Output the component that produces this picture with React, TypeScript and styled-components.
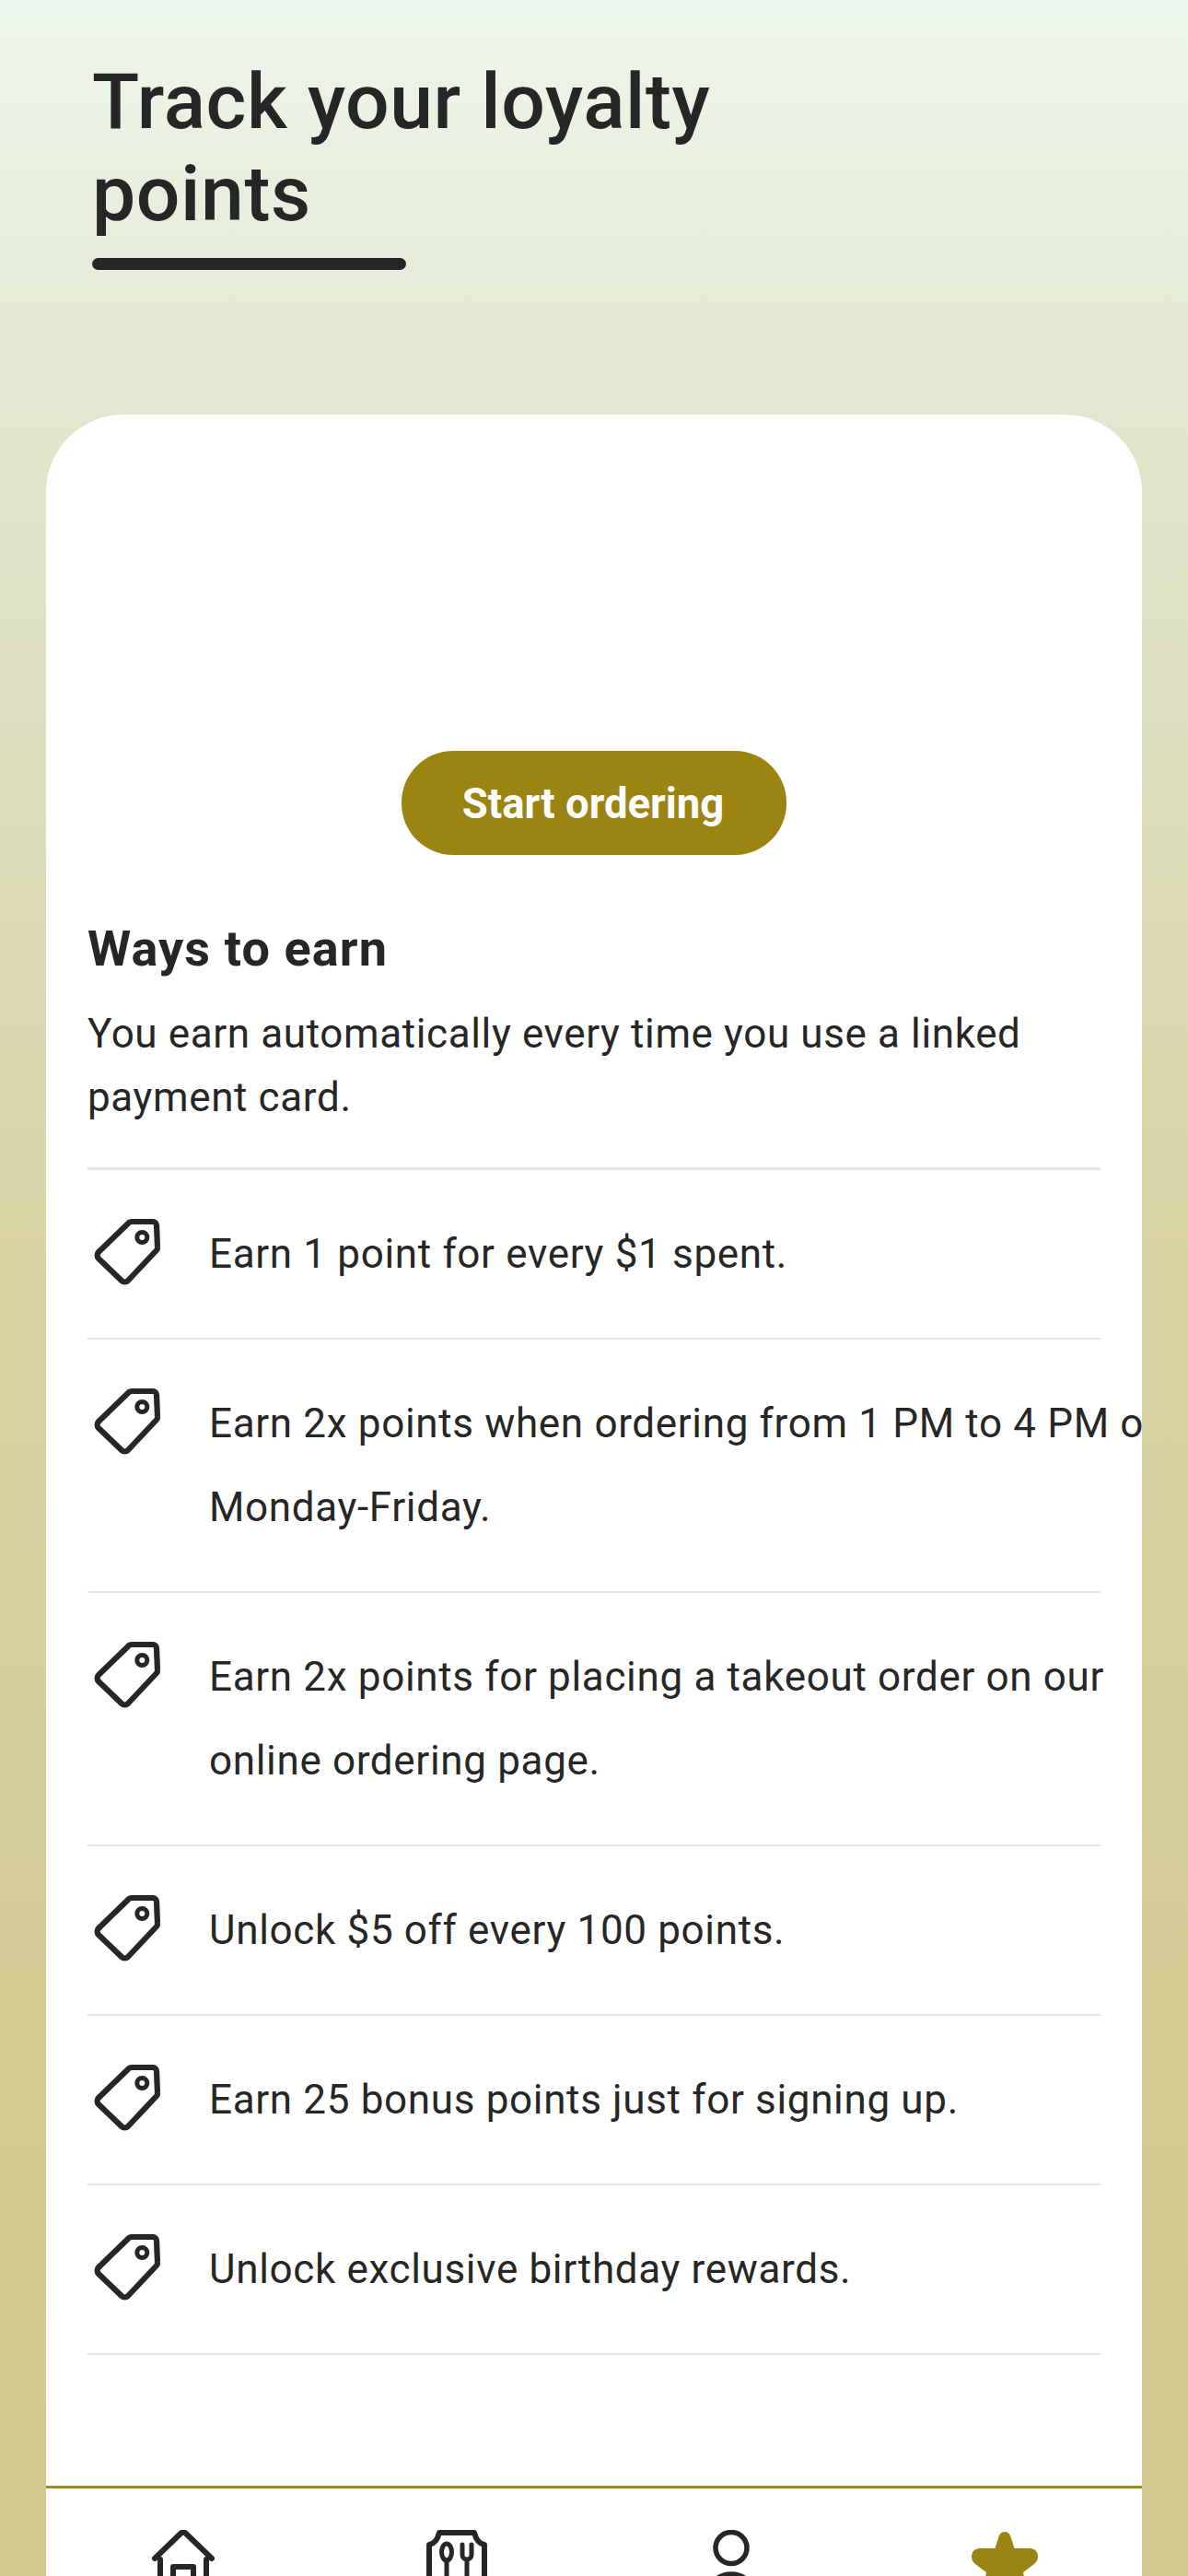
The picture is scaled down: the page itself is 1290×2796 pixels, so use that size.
import React from "react";
import styled, { createGlobalStyle } from "styled-components";

const Global = createGlobalStyle`
  html, body { margin: 0; padding: 0; height: 2796px; overflow: hidden; }
  body { font-family: Roboto, "Noto Sans", sans-serif; color: #262626; }
`;

const Page = styled.div`
  display: flex;
  flex-direction: column;
  width: 1290px;
  height: 2796px;
  overflow: hidden;
  background: linear-gradient(180deg, #edf6ec 0%, #e1e6cd 17%, #d8d2a2 50%, #d3c992 82%, #d3c890 100%);
`;

const Header = styled.header`
  height: 450px;
  box-sizing: border-box;
  padding: 61px 100px 0;
`;

const Title = styled.h1`
  margin: 0;
  width: 800px;
  font-size: 84px;
  line-height: 100px;
  font-weight: 500;
  letter-spacing: 0.6px;
  color: #262626;
`;

const TitleBar = styled.div`
  width: 341px;
  height: 13px;
  margin-top: 19px;
  border-radius: 7px;
  background: #262626;
`;

const Card = styled.main`
  flex: 1;
  min-height: 0;
  margin: 0 50px;
  display: flex;
  flex-direction: column;
  overflow: hidden;
  background: #fff;
  border-radius: 84px 84px 0 0;
`;

const Content = styled.div`
  flex: 1;
  min-height: 0;
  padding: 365px 45px 0;
`;

const CtaRow = styled.div`
  display: flex;
  justify-content: center;
`;

const Cta = styled.button`
  width: 418px;
  height: 113px;
  padding: 2px 2px 0 0;
  border: 0;
  border-radius: 56px;
  background: #9c8412;
  color: #fff;
  font: 700 45.500px Roboto, sans-serif;
`;

const Heading = styled.h2`
  margin: 70px 0 0;
  font-size: 54px;
  line-height: 64px;
  font-weight: 700;
  letter-spacing: 1.100px;
  color: #262626;
`;

const Lead = styled.p`
  margin: 26px 0 0;
  padding-bottom: 42px;
  font-size: 44px;
  line-height: 68.500px;
  font-weight: 400;
  letter-spacing: 0.62px;
  color: #262626;
`;

const List = styled.ul`
  list-style: none;
  margin: 0;
  padding: 0;
  width: 1100px;
  border-top: 3px solid #e4e4e4;
`;

const Item = styled.li`
  display: flex;
  align-items: flex-start;
  box-sizing: border-box;
  padding: 45.500px 0;
  border-bottom: 2px solid #e4e4e4;
`;

const TagIcon = styled.svg`
  flex: none;
  width: 80px;
  height: 80px;
  margin: 2px 47px 0 5px;
`;

const ItemText = styled.span`
  flex: none;
  width: 1050px;
  font-size: 44px;
  line-height: 91px;
  letter-spacing: 0.66px;
  color: #262626;
`;

const Nav = styled.nav`
  flex: none;
  height: 98px;
  box-sizing: border-box;
  display: grid;
  grid-template-columns: repeat(4, 1fr);
  overflow: hidden;
  border-top: 3px solid #9c8a1f;
`;

const NavItem = styled.div`
  display: flex;
  justify-content: center;
  padding-top: 45px;
`;

const NavIcon = styled.svg`
  flex: none;
  width: 80px;
  height: 80px;
`;

const items = [
  "Earn 1 point for every $1 spent.",
  "Earn 2x points when ordering from 1 PM to 4 PM on Monday-Friday.",
  "Earn 2x points for placing a takeout order on our online ordering page.",
  "Unlock $5 off every 100 points.",
  "Earn 25 bonus points just for signing up.",
  "Unlock exclusive birthday rewards.",
];

const Tag = () => (
  <TagIcon viewBox="0 0 80 80" fill="none" stroke="#262626" strokeWidth="6.200" strokeLinejoin="round">
    <path d="M43 8H66a4 4 0 0 1 4 4L71 36a4 4 0 0 1-1 3L39 72a5 5 0 0 1-7 0L7 48a5 5 0 0 1 0-7L39 10a5 5 0 0 1 4-2Z" />
    <circle cx="54.300" cy="25" r="5.500" strokeWidth="5" />
  </TagIcon>
);

export default function App() {
  return (
    <Page>
      <Global />
      <Header>
        <Title>Track your loyalty points</Title>
        <TitleBar />
      </Header>
      <Card>
        <Content>
          <CtaRow>
            <Cta>Start ordering</Cta>
          </CtaRow>
          <Heading>Ways to earn</Heading>
          <Lead>You earn automatically every time you use a linked payment card.</Lead>
          <List>
            {items.map((t) => (
              <Item key={t}>
                <Tag />
                <ItemText>{t}</ItemText>
              </Item>
            ))}
          </List>
        </Content>
        <Nav>
          <NavItem>
            <NavIcon viewBox="0 0 80 80" fill="none" stroke="#262626" strokeWidth="6" strokeLinejoin="round" strokeLinecap="round">
              <path d="M9 31 37 4a4 4 0 0 1 6 0L71 31M15 32V80M65 32V80" />
              <path d="M29 80V40H51V80" />
            </NavIcon>
          </NavItem>
          <NavItem>
            <NavIcon viewBox="0 0 80 80" fill="none" stroke="#262626" strokeWidth="6" strokeLinejoin="round" strokeLinecap="round">
              <path d="M10 80V16c6-1 9-5 11-13H59c2 8 5 12 11 13V80" />
              <ellipse cx="29" cy="24" rx="5.500" ry="9" strokeWidth="5" />
              <path d="M29 33V72M46 16V27a5 5 0 0 0 10 0V16M51 32V72" strokeWidth="5" />
            </NavIcon>
          </NavItem>
          <NavItem>
            <NavIcon viewBox="0 0 80 80" fill="none" stroke="#262626" strokeWidth="5.500" strokeLinecap="round">
              <circle cx="40" cy="19.500" r="17" />
              <path d="M14 76c0-18 12-28 26-28s26 10 26 28" />
            </NavIcon>
          </NavItem>
          <NavItem>
            <NavIcon viewBox="0 0 80 80">
              <path fill="#9c8412" d="M40 2c4 0 6 3 7 7l3.500 11H67c6 0 9 4 9 9 0 3-1.500 6-4 8L60 46l5 24c1 5-3 8-7 6L40 65 22 76c-4 2-8-1-7-6l5-24L8 37c-2.500-2-4-5-4-8 0-5 3-9 9-9H29.500L33 9c1-4 3-7 7-7Z" />
            </NavIcon>
          </NavItem>
        </Nav>
      </Card>
    </Page>
  );
}
